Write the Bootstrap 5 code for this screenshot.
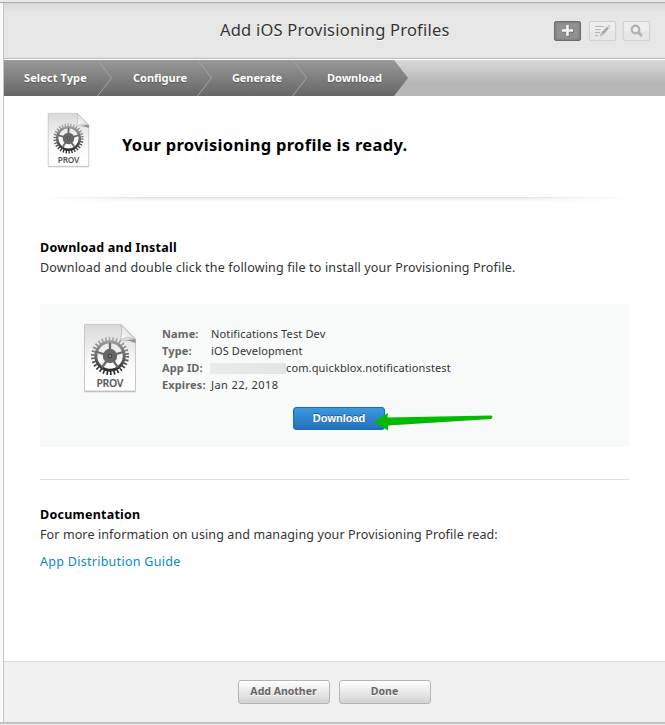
<!DOCTYPE html>
<html lang="en">
<head>
<meta charset="utf-8">
<meta name="viewport" content="width=device-width, initial-scale=1">
<title>Add iOS Provisioning Profiles</title>
<link href="https://cdn.jsdelivr.net/npm/bootstrap@5.3.0/dist/css/bootstrap.min.css" rel="stylesheet">
<style>
body{height:725px;overflow:hidden;background:#e8e9e9;font-family:"Noto Sans","Open Sans",sans-serif;font-size:12.5px;line-height:20px;color:#333;padding-top:2px}
.frame{height:721px;border-top:1px solid #a9a9a9;border-bottom:1px solid #bcbcbc;background:#f9fbfa;padding-left:3px;box-shadow:0 1px 1px #ccc}
.sheet{border-left:1px solid #c3c6c5;background:#fff}
.titlebar{height:56px;background:linear-gradient(#d8d8d8,#e6e6e6 9px);border-bottom:1px solid #b9b9b9;padding-right:15px}
.titlebar h1{font-size:16.5px;line-height:24px;color:#333;text-shadow:0 1px 0 #fff;letter-spacing:.21px;padding-left:216px;padding-bottom:1px}
.tool{width:27px;height:20px;border:1px solid #d0d0d0;border-radius:2px;background:linear-gradient(#eee 50%,#e7e7e7 50%);box-shadow:0 0 1px #ccc}
.tool.on{background:#929292;border-color:#6c6c6c;box-shadow:inset 0 0 3px #666}
.tool-edit{margin-left:8px}
.tool-find{margin-left:7px}
.steps{height:36px;margin-top:1px;background:linear-gradient(#d9d9d9,#b6b6b6 65%,#b8b8b8)}
.step{height:36px;line-height:36px;font-size:11px;font-weight:700;color:#fff;text-shadow:0 1px 1px #555;white-space:nowrap;flex:none}
.trail{width:404px;background:linear-gradient(#999,#666);clip-path:polygon(0 0,390px 0,404px 18px,390px 36px,0 36px)}
.chev{width:15px;height:36px;flex:none}
.s1{padding-left:20px;width:93px;letter-spacing:.1px}
.s2{padding-left:21px;width:85px}
.s3{padding-left:20px;width:80px;letter-spacing:-.1px}
.s4{padding-left:20px}
.main{padding:16px 36px 0 36px}
.doc-sm{margin-left:7px}
h2{font-size:16.5px;font-weight:700;color:#000;line-height:24px;letter-spacing:.3px;margin-left:32px;padding-top:21px}
h3{font-size:12.5px;line-height:20px;font-weight:700;color:#000;letter-spacing:.24px}
.t-inst{letter-spacing:.16px}
.t-doc{letter-spacing:.11px}
.shade{height:5px;margin-top:29px;background:linear-gradient(90deg,#fff,transparent 18%,transparent 82%,#fff),linear-gradient(#dcdcdc,#f4f4f4 40%,#fff)}
.install{margin-top:36px}
.panel-box{height:143px;background:#f8faf9;margin-top:26px;padding:19px 0 0 43px}
.info{font-size:11px;line-height:17px;margin-left:25px;padding-top:2px;letter-spacing:.13px}
.info dt{width:49px;color:#666;font-weight:700}
.info dd{color:#333}
.date{letter-spacing:.42px}
.mask{display:inline-block;width:76px;height:11px;background:linear-gradient(90deg,#e9ebea,#e3e4e4);vertical-align:-2px;margin-left:-1px}
.get{width:92px;margin:14px 0 0 210px}
.btn-get{width:92px;height:23px;padding:0;font-family:"Liberation Sans",Arial,sans-serif;font-size:11px;line-height:21px;font-weight:700;color:#fff;border:1px solid #1a6fb4;border-radius:3px;background:linear-gradient(#3c98e0,#2570bd);text-shadow:0 -1px 0 #1b5c9c}
.arrow{left:80px;top:3px}
.rule{height:1px;background:#e0e0e0;margin-top:32px}
.docs{margin-top:25px}
.link-row{margin-top:7px;letter-spacing:.28px}
.guide{color:#0a88c4}
.foot{height:61px;border-top:1px solid #dedede;background:#f1f1f1;gap:9px;padding-right:1px}
.btn-plain{width:92px;height:24px;padding:0 0 2px;font-size:10.5px;line-height:20px;font-weight:700;color:#666;border:1px solid #b4b4b4;border-radius:3px;background:linear-gradient(#fff,#d3d3d3);text-shadow:0 1px 0 #fff}
</style>
</head>
<body>
<svg width="0" height="0" class="position-absolute">
<defs>
<linearGradient id="pg" x2="0" y2="1"><stop stop-color="#dadada"/><stop offset=".6" stop-color="#fafafa"/><stop offset="1" stop-color="#fff"/></linearGradient>
<linearGradient id="gg" gradientUnits="userSpaceOnUse" x1="0" y1="14" x2="0" y2="52"><stop stop-color="#aaa"/><stop offset=".5" stop-color="#6a6a6a"/><stop offset="1" stop-color="#1c1c1c"/></linearGradient>
<linearGradient id="fg" x1="0" y1="1" x2="1" y2="0"><stop stop-color="#fff"/><stop offset=".5" stop-color="#e5e5e5"/><stop offset="1" stop-color="#fff"/></linearGradient>
<symbol id="prov" viewBox="0 0 54 70">
<path d="M1.500 1.500H38L52.500 16V68.500H1.500Z" fill="#bbb" transform="translate(0 .8)"/>
<path d="M1.500 1.500H38L52.500 16V68H1.500Z" fill="url(#pg)" stroke="#c8c8c8"/>
<path d="M36 18Q44 16 52.500 20V16Z" fill="#666" opacity=".7"/>
<g stroke="url(#gg)" fill="none">
<circle cx="27" cy="33" r="17" stroke-width="4" stroke-dasharray="1.600 1.960"/>
<circle cx="27" cy="33" r="14.200" stroke-width="3"/>
</g>
<path d="M27 33L40 29M27 33L27 20M27 33L14 29M27 33L19 44.500M27 33L35 44.500" stroke="#6a6a6a" stroke-width="2.300"/>
<circle cx="27" cy="33" r="7.200" fill="#666"/><circle cx="27" cy="33" r="1.800" fill="#888" stroke="#3c3c3c"/>
<path d="M38 1.500Q40 10 37.500 16.500Q46 13 52.500 16.500Z" fill="url(#fg)" stroke="#b5b5b5" stroke-width=".8"/>
<text x="27" y="63.800" text-anchor="middle" font-family="Noto Sans, sans-serif" font-size="10.500" font-weight="600" fill="#555" textLength="27">PROV</text>
</symbol>
</defs>
</svg>
<div class="frame">
<div class="sheet h-100 d-flex flex-column">
<header class="titlebar d-flex align-items-center flex-shrink-0">
<h1 class="m-0 fw-normal me-auto text-nowrap">Add iOS Provisioning Profiles</h1>
<div class="d-flex">
<span class="tool on d-flex align-items-center justify-content-center"><svg width="13" height="13"><path d="M6.500 1V12M1 6.500H12" stroke="#555" stroke-width="3" transform="translate(.7 .8)" opacity=".5"/><path d="M6.500 1V12M1 6.500H12" stroke="#f3f3f3" stroke-width="2.600"/></svg></span>
<span class="tool tool-edit d-flex align-items-center justify-content-center"><svg width="17" height="12" fill="none" stroke="#b3b3b3"><path d="M1 1.500H10M1 4.500H7M1 7.500H6M1 10.500H4"/><path d="M8 9L14 2.500" stroke="#aaa" stroke-width="2.800"/><path d="M6 11L6.700 8.500L8.500 10.200Z" fill="#aaa" stroke="none"/><path d="M14.700 1.700L15.400 1" stroke-width="2.800"/></svg></span>
<span class="tool tool-find d-flex align-items-center justify-content-center"><svg width="13" height="13" fill="none" stroke="#b0b0b0"><circle cx="5.500" cy="5.500" r="3.800" stroke-width="2.200"/><path d="M8 8L12 12" stroke-width="2.700"/></svg></span>
</div>
</header>
<nav class="steps flex-shrink-0">
<div class="trail d-flex">
<span class="step s1">Select Type</span><svg class="chev" fill="none" stroke="#a4a4a4"><path d="M.5 0L14.500 18L.5 36"/></svg>
<span class="step s2">Configure</span><svg class="chev" fill="none" stroke="#a4a4a4"><path d="M.5 0L14.500 18L.5 36"/></svg>
<span class="step s3">Generate</span><svg class="chev" fill="none" stroke="#a4a4a4"><path d="M.5 0L14.500 18L.5 36"/></svg>
<span class="step s4">Download</span>
</div>
</nav>
<main class="main flex-grow-1">
<div class="d-flex">
<svg class="doc-sm" width="43" height="56"><use href="#prov"/></svg>
<h2 class="mb-0">Your provisioning profile is ready.</h2>
</div>
<div class="shade"></div>
<h3 class="install mb-0">Download and Install</h3>
<p class="mb-0 t-inst">Download and double click the following file to install your Provisioning Profile.</p>
<section class="panel-box">
<div class="d-flex">
<svg width="54" height="70"><use href="#prov"/></svg>
<dl class="info mb-0">
<div class="d-flex"><dt>Name:</dt><dd class="mb-0">Notifications Test Dev</dd></div>
<div class="d-flex"><dt>Type:</dt><dd class="mb-0">iOS Development</dd></div>
<div class="d-flex"><dt>App ID:</dt><dd class="mb-0 text-nowrap"><span class="mask"></span>com.quickblox.notificationstest</dd></div>
<div class="d-flex"><dt>Expires:</dt><dd class="mb-0 date">Jan 22, 2018</dd></div>
</dl>
</div>
<div class="get position-relative">
<button class="btn btn-get d-block" type="button">Download</button>
<svg class="arrow position-absolute" width="124" height="22"><path d="M1 11.500L15 3L14.500 7.500L118 5.500Q121 6.500 118 9L15 15.500V20.500Z" fill="#0b0"/></svg>
</div>
</section>
<div class="rule"></div>
<h3 class="docs mb-0">Documentation</h3>
<p class="mb-0 t-doc">For more information on using and managing your Provisioning Profile read:</p>
<p class="mb-0 link-row"><a class="guide text-decoration-none" href="#">App Distribution Guide</a></p>
</main>
<footer class="foot d-flex justify-content-center align-items-center flex-shrink-0">
<button class="btn btn-plain" type="button">Add Another</button>
<button class="btn btn-plain" type="button">Done</button>
</footer>
</div>
</div>
<script src="https://cdn.jsdelivr.net/npm/bootstrap@5.3.0/dist/js/bootstrap.bundle.min.js"></script>
</body>
</html>
